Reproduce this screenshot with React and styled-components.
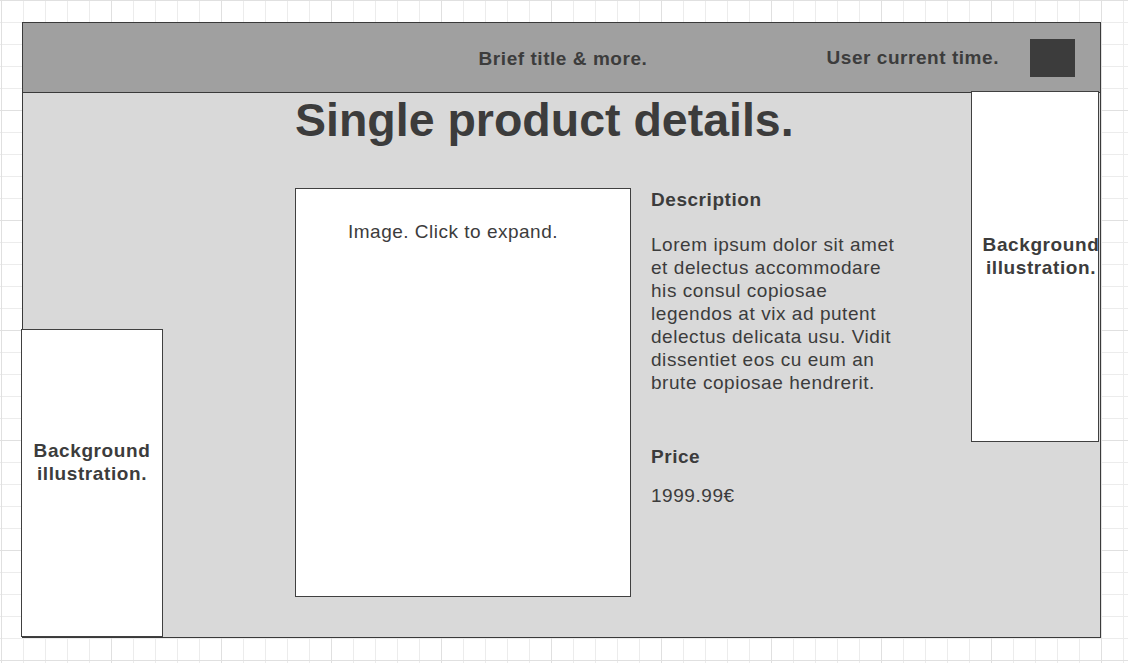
import React from "react";
import styled, { createGlobalStyle } from "styled-components";

const GlobalStyle = createGlobalStyle`
  html, body {
    margin: 0;
    padding: 0;
  }
  body {
    font-family: "Liberation Sans", Arial, sans-serif;
    color: #3c3c3c;
  }
  * { box-sizing: border-box; }
`;

const Canvas = styled.div`
  position: relative;
  min-height: 100vh;
  padding: 22px;
  background-color: #ffffff;
  background-image:
    linear-gradient(to right, #e0e0e0 1px, transparent 1px),
    linear-gradient(to bottom, #e0e0e0 1px, transparent 1px),
    linear-gradient(to right, #ececec 1px, transparent 1px),
    linear-gradient(to bottom, #ececec 1px, transparent 1px);
  background-size: 110px 110px, 110px 110px, 22px 22px, 22px 22px;
  background-position: 1px 0, 1px 0, 1px 0, 1px 0;
`;

const Frame = styled.div`
  width: 1079px;
  height: 616px;
  border: 1px solid #3a3a3a;
  background: #d9d9d9;
  display: flex;
  flex-direction: column;
`;

const Header = styled.header`
  height: 70px;
  flex: none;
  background: #a0a0a0;
  border-bottom: 1px solid #3a3a3a;
  display: flex;
  align-items: center;
`;

const Side = styled.div`
  flex: 1;
  display: flex;
  align-items: center;
  justify-content: ${(p) => (p.$end ? "flex-end" : "flex-start")};
`;

const HeaderText = styled.span`
  font-size: 19px;
  font-weight: bold;
  letter-spacing: 0.55px;
  line-height: 23px;
  padding-top: ${(p) => (p.$low ? "2px" : "0")};
  margin-left: ${(p) => (p.$low ? "3px" : "0")};
`;

const Avatar = styled.div`
  width: 45px;
  height: 38px;
  margin-left: 31px;
  margin-right: 25px;
  background: #3c3c3c;
`;

const Body = styled.main`
  flex: 1;
  padding-left: 272px;
`;

const Title = styled.h1`
  margin: 0;
  font-size: 46.5px;
  line-height: 54px;
  font-weight: bold;
  color: #3c3c3c;
`;

const Row = styled.div`
  display: flex;
  gap: 20px;
  margin-top: 41px;
`;

const ImageBox = styled.div`
  width: 336px;
  height: 409px;
  background: #ffffff;
  border: 1px solid #404040;
  padding: 31px 20px 0 0;
  text-align: center;
  font-size: 19px;
  line-height: 23px;
  letter-spacing: 0.5px;
  cursor: pointer;
`;

const Details = styled.section`
  width: 256px;
  display: flex;
  flex-direction: column;
`;

const Label = styled.h2`
  margin: ${(p) => p.$top || "0"} 0 0;
  font-size: 19px;
  line-height: 23px;
  font-weight: bold;
  letter-spacing: 0.55px;
`;

const Text = styled.p`
  margin: ${(p) => p.$top || "0"} 0 0;
  font-size: 19px;
  line-height: 23px;
  letter-spacing: 0.55px;
`;

const Illustration = styled.div`
  position: absolute;
  left: ${(p) => p.$x}px;
  top: ${(p) => p.$y}px;
  width: ${(p) => p.$w}px;
  height: ${(p) => p.$h}px;
  background: #ffffff;
  border: 1px solid #404040;
  display: flex;
  align-items: center;
  justify-content: center;
  text-align: center;
  padding-bottom: ${(p) => p.$pb}px;
  padding-left: ${(p) => p.$pl || 0}px;
  font-size: 19px;
  line-height: 23px;
  font-weight: bold;
  letter-spacing: 0.6px;
`;

export default function App() {
  return (
    <>
      <GlobalStyle />
      <Canvas>
        <Frame>
          <Header>
            <Side />
            <HeaderText $low>Brief title &amp; more.</HeaderText>
            <Side $end>
              <HeaderText>User current time.</HeaderText>
              <Avatar />
            </Side>
          </Header>
          <Body>
            <Title>Single product details.</Title>
            <Row>
              <ImageBox>Image. Click to expand.</ImageBox>
              <Details>
                <Label>Description</Label>
                <Text $top="22px">
                  Lorem ipsum dolor sit amet et delectus accommodare his consul
                  copiosae legendos at vix ad putent delectus delicata usu.
                  Vidit dissentiet eos cu eum an brute copiosae hendrerit.
                </Text>
                <Label $top="51px">Price</Label>
                <Text $top="16px">1999.99€</Text>
              </Details>
            </Row>
          </Body>
        </Frame>
        <Illustration $x={971} $y={91} $w={128} $h={351} $pb={22} $pl={12}>
          Background illustration.
        </Illustration>
        <Illustration $x={21} $y={329} $w={142} $h={308} $pb={42}>
          Background illustration.
        </Illustration>
      </Canvas>
    </>
  );
}
